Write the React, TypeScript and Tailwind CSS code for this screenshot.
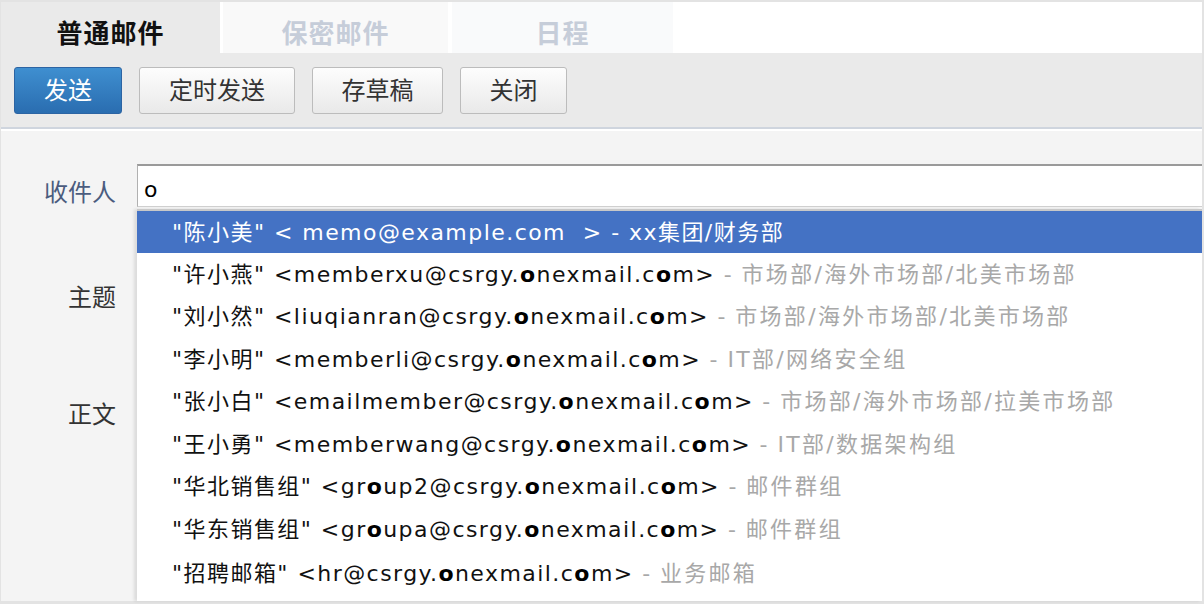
import React from "react";

const FONT = '"DejaVu Sans", "Noto Sans CJK SC", sans-serif';

type Part = { t: string; b?: boolean };
type Row = { parts: Part[]; dept: string };

const split = (s: string): Part[] => {
  const out: Part[] = [];
  const re = /(\.)(o)(nexmail\.c)(o)(m)/;
  const m = s.match(re);
  if (!m || m.index === undefined) return [{ t: s }];
  out.push({ t: s.slice(0, m.index) + "." });
  out.push({ t: "o", b: true });
  out.push({ t: "nexmail.c" });
  out.push({ t: "o", b: true });
  out.push({ t: "m" + s.slice(m.index + m[0].length) });
  return out;
};

const rows: Row[] = [
  { parts: split('"许小燕" <memberxu@csrgy.onexmail.com>'), dept: "市场部/海外市场部/北美市场部" },
  { parts: split('"刘小然" <liuqianran@csrgy.onexmail.com>'), dept: "市场部/海外市场部/北美市场部" },
  { parts: split('"李小明" <memberli@csrgy.onexmail.com>'), dept: "IT部/网络安全组" },
  { parts: split('"张小白" <emailmember@csrgy.onexmail.com>'), dept: "市场部/海外市场部/拉美市场部" },
  { parts: split('"王小勇" <memberwang@csrgy.onexmail.com>'), dept: "IT部/数据架构组" },
  {
    parts: [{ t: '"华北销售组" <gr' }, { t: "o", b: true }, ...split("up2@csrgy.onexmail.com>")],
    dept: "邮件群组",
  },
  {
    parts: [{ t: '"华东销售组" <gr' }, { t: "o", b: true }, ...split("upa@csrgy.onexmail.com>")],
    dept: "邮件群组",
  },
  { parts: split('"招聘邮箱" <hr@csrgy.onexmail.com>'), dept: "业务邮箱" },
];

export default function App() {
  return (
    <div
      className="w-[1204px] h-[604px] bg-[#e3e3e3] pt-[2px] pr-[2px] pb-[3px] pl-[1px] flex flex-col overflow-hidden"
      style={{ fontFamily: FONT }}
    >
      {/* Tabs */}
      <div className="h-[51px] flex bg-white shrink-0">
        <div className="w-[219px] bg-[#eaeaea] flex items-center justify-center pt-[13px] text-[26px] tracking-[1px] font-bold text-[#111]">
          普通邮件
        </div>
        <div className="w-[3px] bg-white" />
        <div className="w-[225px] bg-[#f9f9f9] flex items-center justify-center pt-[13px] text-[26px] tracking-[1px] font-bold text-[#c6cdd9]">
          保密邮件
        </div>
        <div className="w-[4px] bg-white" />
        <div className="w-[221px] bg-[#f9fafb] flex items-center justify-center pt-[13px] text-[26px] tracking-[1px] font-bold text-[#c6cdd9]">
          日程
        </div>
        <div className="flex-1 bg-white" />
      </div>

      {/* Toolbar */}
      <div className="h-[74px] bg-[#eaeaea] flex items-center gap-[17px] pl-[13px] pt-[1px] shrink-0">
        <button className="w-[108px] h-[47px] rounded-[3px] border border-[#2c64a3] bg-gradient-to-b from-[#3f8fd0] to-[#2a6db0] text-white text-[24px] flex items-center justify-center">
          发送
        </button>
        <button className="w-[156px] h-[47px] rounded-[3px] border border-[#bcbcbc] bg-gradient-to-b from-[#fdfdfd] to-[#e9e9e9] text-[#333] text-[24px] flex items-center justify-center">
          定时发送
        </button>
        <button className="w-[131px] h-[47px] rounded-[3px] border border-[#bcbcbc] bg-gradient-to-b from-[#fdfdfd] to-[#e9e9e9] text-[#333] text-[24px] flex items-center justify-center">
          存草稿
        </button>
        <button className="w-[107px] h-[47px] rounded-[3px] border border-[#bcbcbc] bg-gradient-to-b from-[#fdfdfd] to-[#e9e9e9] text-[#333] text-[24px] flex items-center justify-center">
          关闭
        </button>
      </div>
      <div className="h-[2px] bg-[#cfd5de] shrink-0" />
      <div className="h-[2px] bg-white shrink-0" />

      {/* Content */}
      <div className="flex-1 bg-[#f4f4f4] relative pt-[33px]">
        <div className="flex items-center h-[43px]">
          <div className="w-[115px] text-right text-[24px] text-[#4b5c7e] pt-[14px]">收件人</div>
          <div className="ml-[21px] flex-1 h-[43px] bg-white border-t-2 border-t-[#9a9a9a] border-l border-l-[#b0b0b0] border-b border-b-[#d0d0d0] flex items-center pl-[6px] pt-[6px] text-[22px] text-black">
            o
          </div>
        </div>
        <div className="flex flex-col">
          <div className="mt-[71px] h-[40px] flex items-center justify-end w-[115px] text-[24px] text-[#333]">主题</div>
          <div className="mt-[77px] h-[40px] flex items-center justify-end w-[115px] text-[24px] text-[#333]">正文</div>
        </div>

        {/* Dropdown */}
        <div className="absolute left-[136px] right-0 top-[78px] bottom-0 bg-white border-t-2 border-t-[#c8c8c8] shadow-[-3px_0_3px_rgba(0,0,0,0.10)] text-[22px] tracking-[1.45px]">
          <div className="h-[42px] bg-[#4472c4] text-white flex items-center pl-[35px] whitespace-pre">
            {'"陈小美" < memo@example.com  > - xx集团/财务部'}
          </div>
          {rows.map((r, i) => (
            <div
              key={i}
              className={`${i === rows.length - 1 ? "h-[45px]" : "h-[42.5px]"} flex items-center pl-[35px] whitespace-pre text-[#111]`}
            >
              {r.parts.map((p, j) =>
                p.b ? (
                  <b key={j} className="font-bold text-black">
                    {p.t}
                  </b>
                ) : (
                  <span key={j}>{p.t}</span>
                )
              )}
              <span className="text-[#a8a8a8]">{" - "}</span>
              <span className="text-[#a8a8a8] tracking-[2.3px]">{r.dept}</span>
            </div>
          ))}
        </div>
      </div>
    </div>
  );
}
